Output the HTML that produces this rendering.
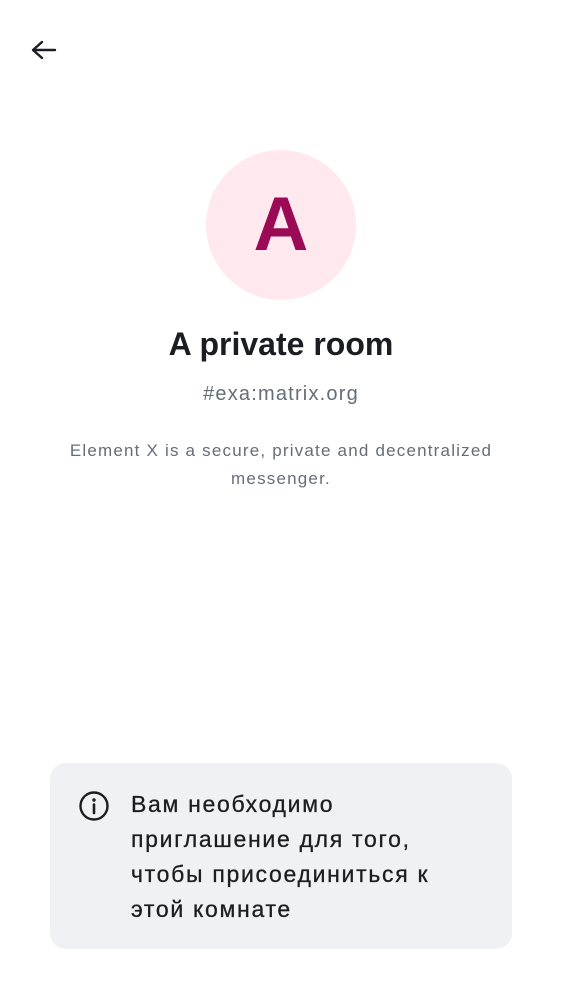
<!DOCTYPE html>
<html><head><meta charset="utf-8"><style>
body{margin:0;width:562px;height:1000px;background:#fff;font-family:"Liberation Sans","DejaVu Sans",sans-serif;position:relative;overflow:hidden;color:#1b1d22}
.abs{position:absolute}
.av{left:206px;top:150px;width:150px;height:150px;border-radius:50%;background:#ffe8ee;color:#9b0a55;font-weight:bold;font-size:76px;text-align:center;line-height:150px}
.c{left:0;width:562px;text-align:center}
.card{left:50px;top:763px;width:462px;height:186px;border-radius:16px;background:#f0f1f5}
.ct{left:131px;top:787px;font-size:23px;line-height:35px;color:#1b1d22;letter-spacing:1.7px;-webkit-text-stroke:0.3px #1b1d22}
</style></head><body>
<svg class="abs" style="left:28px;top:36px" width="30" height="30" viewBox="0 0 30 30"><path d="M27 14H6M14 6L5 14L14 22" stroke="#1b1d22" stroke-width="2.4" fill="none" stroke-linecap="round" stroke-linejoin="round"/></svg>
<div class="abs av">A</div>
<div class="abs c" style="top:326px;font-size:32px;font-weight:bold">A private room</div>
<div class="abs c" style="top:383px;font-size:20px;color:#656d77;letter-spacing:1.2px">#exa:matrix.org</div>
<div class="abs c" style="top:437px;font-size:17px;line-height:28px;color:#656d77;letter-spacing:1.2px">Element X is a secure, private and decentralized<br>messenger.</div>
<div class="abs card"></div>
<svg class="abs" style="left:78px;top:790px" width="32" height="32" viewBox="0 0 32 32"><circle cx="16" cy="16" r="13.5" stroke="#1b1d22" stroke-width="2.4" fill="none"/><circle cx="16" cy="10" r="1.7" fill="#1b1d22"/><path d="M16 14.5V23" stroke="#1b1d22" stroke-width="2.6" stroke-linecap="round"/></svg>
<div class="abs ct">Вам необходимо<br>приглашение для того,<br>чтобы присоединиться к<br>этой комнате</div>
</body></html>
